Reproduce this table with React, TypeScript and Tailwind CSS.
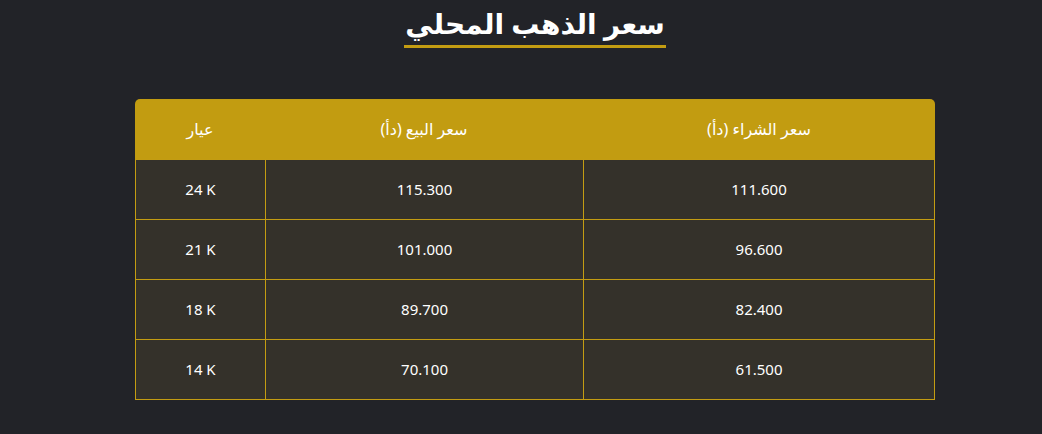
const rows = [
  { karat: "24 K", sell: "115.300", buy: "111.600" },
  { karat: "21 K", sell: "101.000", buy: "96.600" },
  { karat: "18 K", sell: "89.700", buy: "82.400" },
  { karat: "14 K", sell: "70.100", buy: "61.500" },
];

export default function App() {
  return (
    <div
      dir="rtl"
      className="min-h-screen bg-[#222328] pl-[28px] text-white"
      style={{ fontFamily: '"Noto Sans", "DejaVu Sans", sans-serif' }}
    >
      <div className="flex justify-center pt-[4px]">
        <h2 className="border-b-[3px] border-[#c39c12] px-[1px] pb-[3px] text-[28px] font-bold leading-[38px]">
          سعر الذهب المحلي
        </h2>
      </div>

      <div className="mx-auto mt-[51px] w-[800px]">
        {/* header */}
        <div className="grid h-[60px] grid-cols-[352px_318px_130px] rounded-t-[5px] bg-[#c29c11] text-[16px]">
          <div className="flex items-center justify-center">سعر الشراء (دأ)</div>
          <div className="flex items-center justify-center">سعر البيع (دأ)</div>
          <div className="flex items-center justify-center">عيار</div>
        </div>

        {/* body */}
        <div className="border-x border-b border-[#c39c12] bg-[#34312a] text-[15px]">
          {rows.map((r) => (
            <div
              key={r.karat}
              className="grid h-[60px] grid-cols-[351px_318px_129px] border-t border-[#c39c12]"
            >
              <div className="flex items-center justify-center border-l border-[#c39c12]">
                {r.buy}
              </div>
              <div className="flex items-center justify-center border-l border-[#c39c12]">
                {r.sell}
              </div>
              <div dir="ltr" className="flex items-center justify-center">
                {r.karat}
              </div>
            </div>
          ))}
        </div>
      </div>
    </div>
  );
}
